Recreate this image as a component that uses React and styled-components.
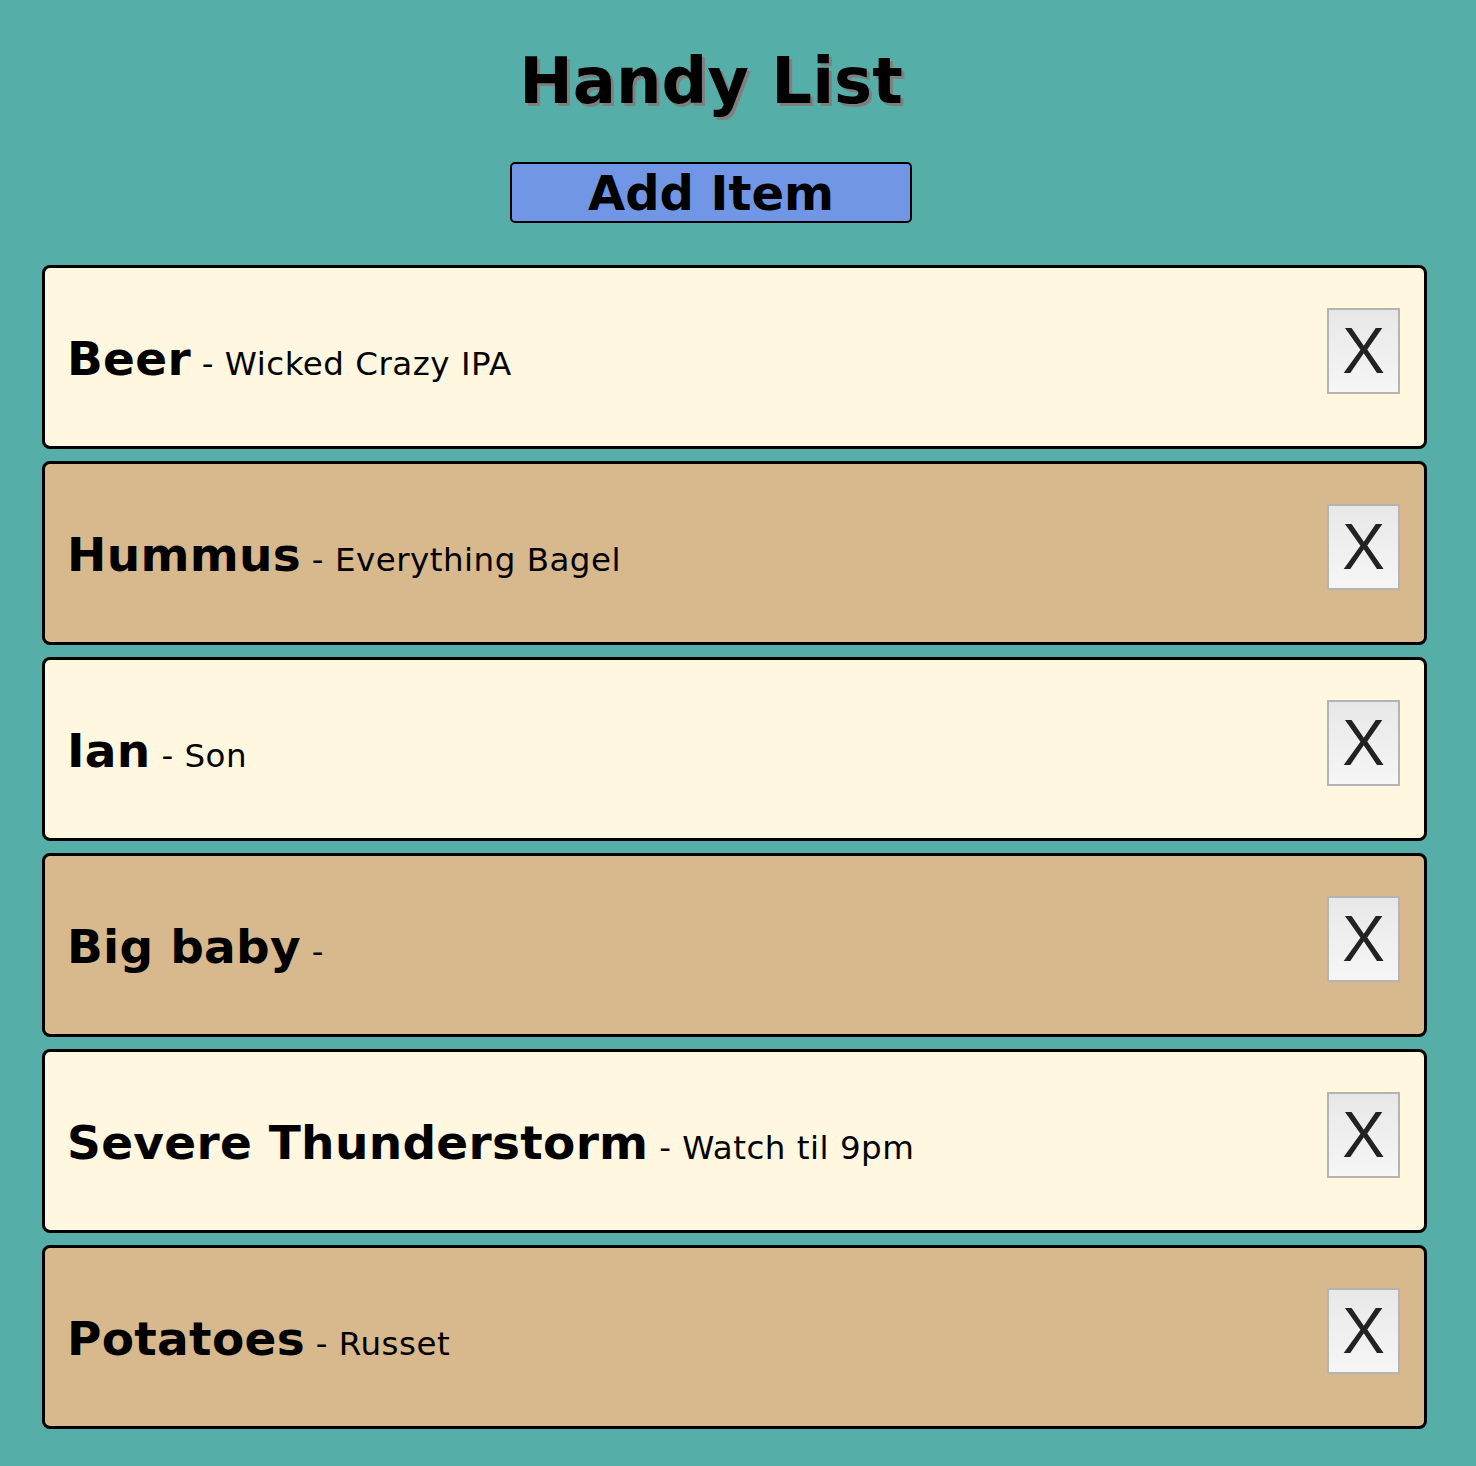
import React from "react";
import styled, { createGlobalStyle } from "styled-components";

const tealColor = "#55afa8";
const creamColor = "#fff7df";
const tanColor = "#d8b88d";
const mainFont = `"DejaVu Sans", Verdana, sans-serif`;

const GlobalStyle = createGlobalStyle`
	body {
		margin: 0;
		background-color: ${tealColor};
		font-family: ${mainFont};
		color: #000;
	}
`;

const Page = styled.main`
	min-height: 1466px;
	box-sizing: border-box;
	padding: 44px 49px 0 42px;
`;

const Header = styled.header`
	display: flex;
	flex-direction: column;
	align-items: center;
	padding-right: 47px;
	h1 {
		margin: 0;
		font-size: 64px;
		line-height: 75px;
		font-weight: bold;
		text-shadow: 3px 3px 0 #7f7f7f;
	}
`;

const AddButton = styled.button`
	margin-top: 43px;
	width: 402px;
	height: 61px;
	box-sizing: border-box;
	background-color: #7096e5;
	border: 2px solid #000;
	border-radius: 5px;
	font-family: ${mainFont};
	font-size: 48px;
	font-weight: bold;
	line-height: 1;
	color: #000;
	padding: 0;
	cursor: pointer;
`;

const List = styled.ul`
	list-style: none;
	margin: 42px 0 0 0;
	padding: 0;
	display: flex;
	flex-direction: column;
	gap: 12px;
`;

const Card = styled.li`
	height: 184px;
	box-sizing: border-box;
	display: flex;
	align-items: center;
	justify-content: space-between;
	background-color: ${(props) => (props.$alt ? tanColor : creamColor)};
	border: 3px solid #000;
	border-radius: 8px;
	padding: 0 24px 0 22px;
	.text {
		font-size: 32.5px;
		letter-spacing: 0.5px;
		margin-top: 2px;
	}
	.name {
		font-size: 47px;
		font-weight: bold;
		letter-spacing: 0.3px;
	}
`;

const DeleteButton = styled.button`
	width: 73px;
	height: 86px;
	box-sizing: border-box;
	margin-bottom: 12px;
	padding: 0;
	border: 2px solid #b4b4b4;
	background: linear-gradient(#e8e8e8, #f6f6f6);
	color: #222;
	font-family: "Liberation Sans", Arial, sans-serif;
	font-size: 64px;
	line-height: 1;
	cursor: pointer;
`;

const items = [
	{ name: "Beer", desc: "Wicked Crazy IPA" },
	{ name: "Hummus", desc: "Everything Bagel" },
	{ name: "Ian", desc: "Son" },
	{ name: "Big baby", desc: "" },
	{ name: "Severe Thunderstorm", desc: "Watch til 9pm" },
	{ name: "Potatoes", desc: "Russet" },
];

export default function App() {
	return (
		<>
			<GlobalStyle />
			<Page>
				<Header>
					<h1>Handy List</h1>
					<AddButton>Add Item</AddButton>
				</Header>
				<List>
					{items.map((item, i) => (
						<Card key={item.name} $alt={i % 2 === 1}>
							<div className='text'>
								<span className='name'>{item.name}</span> - {item.desc}
							</div>
							<DeleteButton>X</DeleteButton>
						</Card>
					))}
				</List>
			</Page>
		</>
	);
}
